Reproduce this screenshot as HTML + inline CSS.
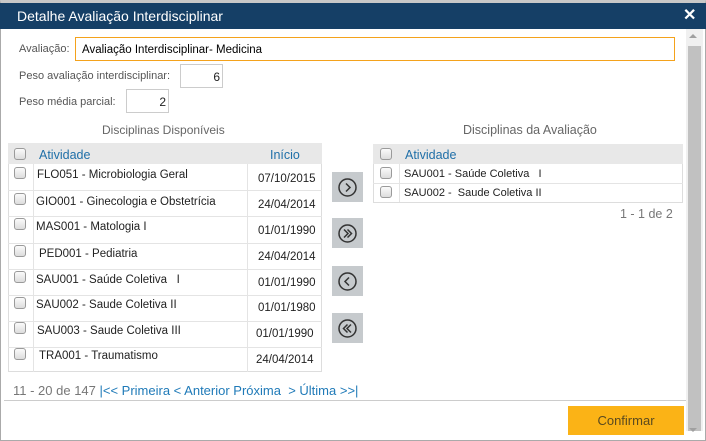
<!DOCTYPE html>
<html><head><meta charset="utf-8"><style>
*{margin:0;padding:0;box-sizing:border-box}
body{width:706px;height:441px;background:#fff;font-family:"Liberation Sans",sans-serif;font-size:11.5px;color:#222;position:relative;overflow:hidden}
.a{position:absolute;white-space:nowrap}
.cb{position:absolute;width:12px;height:12px;border:1px solid #9a9a9a;border-radius:3px;background:linear-gradient(#fafafa,#dcdcdc)}
.btn{position:absolute;left:332px;width:31px;height:30px;background:#c6cacd}
.btn svg{position:absolute;left:5px;top:5px}
.lbl{color:#555;font-size:11px}
.hdr{color:#1f6fa8;font-size:12.5px}
</style></head><body>
<div class="a" style="left:0;top:0;width:706px;height:441px;border:1px solid #aaa;border-top:3px solid #c8c8c8"></div>
<div class="a" style="left:0;top:3px;width:706px;height:26px;background:#153f66"></div>
<div class="a" style="left:17px;top:8px;color:#fff;font-size:14px">Detalhe Avaliação Interdisciplinar</div>
<div class="a" style="left:683px;top:5px;color:#fff;font-size:16px;font-weight:bold">✕</div>
<div class="a" style="left:686px;top:29px;width:17px;height:402px;background:#f0f0f0"></div>
<div class="a" style="left:688px;top:46px;width:13px;height:385px;background:#c1c1c1"></div>
<div class="a" style="left:689px;top:34px;width:0;height:0;border:4px solid transparent;border-bottom:4px solid #a0a0a0;border-top:0"></div>
<div class="a" style="left:689px;top:428px;width:0;height:0;border:4px solid transparent;border-top:4px solid #a0a0a0;border-bottom:0"></div>

<div class="a lbl" style="left:19px;top:43px">Avaliação:</div>
<div class="a" style="left:75px;top:37px;width:600px;height:24px;border:1px solid #f4a21c;padding:6px 6px;font-size:11.5px;color:#000">Avaliação Interdisciplinar- Medicina</div>
<div class="a lbl" style="left:19px;top:70px">Peso avaliação interdisciplinar:</div>
<div class="a" style="left:180px;top:64px;width:43px;height:24px;border:1px solid #ccc;text-align:right;padding:5px 2px;font-size:12px">6</div>
<div class="a lbl" style="left:19px;top:96px">Peso média parcial:</div>
<div class="a" style="left:126px;top:89px;width:43px;height:24px;border:1px solid #ccc;text-align:right;padding:5px 2px;font-size:12px">2</div>

<div class="a" style="left:102px;top:123px;color:#666;font-size:12px">Disciplinas Disponíveis</div>
<div class="a" style="left:8px;top:143px;width:314px;height:21px;background:#e8e8e8"></div>
<div class="cb" style="left:14px;top:148px"></div>
<div class="a hdr" style="left:39px;top:148px">Atividade</div>
<div class="a hdr" style="left:270px;top:148px">Início</div>
<div class="a" style="left:8px;top:164px;width:314px;height:208px;border-left:1px solid #ddd;border-right:1px solid #ddd;border-bottom:1px solid #ddd"></div>
<div class="a" style="left:33px;top:164px;width:1px;height:208px;background:#e4e4e4"></div>
<div class="a" style="left:247px;top:164px;width:1px;height:208px;background:#e4e4e4"></div>

<div class="a" style="left:8px;top:190px;width:314px;height:1px;background:#e4e4e4"></div>
<div class="a" style="left:8px;top:216px;width:314px;height:1px;background:#e4e4e4"></div>
<div class="a" style="left:8px;top:243px;width:314px;height:1px;background:#e4e4e4"></div>
<div class="a" style="left:8px;top:269px;width:314px;height:1px;background:#e4e4e4"></div>
<div class="a" style="left:8px;top:295px;width:314px;height:1px;background:#e4e4e4"></div>
<div class="a" style="left:8px;top:321px;width:314px;height:1px;background:#e4e4e4"></div>
<div class="a" style="left:8px;top:347px;width:314px;height:1px;background:#e4e4e4"></div>

<div class="cb" style="left:14px;top:167px"></div><div class="a" style="left:37px;top:169px">FLO051 - Microbiologia Geral</div><div class="a" style="left:258px;top:173px">07/10/2015</div>
<div class="cb" style="left:14px;top:193px"></div><div class="a" style="left:36px;top:196px">GIO001 - Ginecologia e Obstetrícia</div><div class="a" style="left:258px;top:199px">24/04/2014</div>
<div class="cb" style="left:14px;top:218px"></div><div class="a" style="left:36px;top:221px">MAS001 - Matologia I</div><div class="a" style="left:258px;top:225px">01/01/1990</div>
<div class="cb" style="left:14px;top:245px"></div><div class="a" style="left:39px;top:248px">PED001 - Pediatria</div><div class="a" style="left:258px;top:251px">24/04/2014</div>
<div class="cb" style="left:14px;top:271px"></div><div class="a" style="left:36px;top:274px">SAU001 - Saúde Coletiva&nbsp;&nbsp; I</div><div class="a" style="left:258px;top:277px">01/01/1990</div>
<div class="cb" style="left:14px;top:297px"></div><div class="a" style="left:36px;top:299px">SAU002 - Saude Coletiva II</div><div class="a" style="left:258px;top:302px">01/01/1980</div>
<div class="cb" style="left:14px;top:322px"></div><div class="a" style="left:37px;top:325px">SAU003 - Saude Coletiva III</div><div class="a" style="left:256px;top:328px">01/01/1990</div>
<div class="cb" style="left:14px;top:348px"></div><div class="a" style="left:39px;top:350px">TRA001 - Traumatismo</div><div class="a" style="left:256px;top:354px">24/04/2014</div>

<div class="a" style="left:13px;top:383px;font-size:13px;color:#777">11 - 20 de 147 <span style="color:#1f7ab8">|&lt;&lt; Primeira &lt; Anterior Próxima &nbsp;&gt; Última &gt;&gt;|</span></div>

<div class="btn" style="top:172px"><svg width="21" height="21" viewBox="0 0 21 21"><circle cx="10.5" cy="10.5" r="8.5" fill="none" stroke="#333" stroke-width="1.5"/><path d="M9 6.5l4 4-4 4" fill="none" stroke="#333" stroke-width="1.5"/></svg></div>
<div class="btn" style="top:218px"><svg width="21" height="21" viewBox="0 0 21 21"><circle cx="10.5" cy="10.5" r="8.5" fill="none" stroke="#333" stroke-width="1.5"/><path d="M7 6.5l4 4-4 4M10.5 6.5l4 4-4 4" fill="none" stroke="#333" stroke-width="1.5"/></svg></div>
<div class="btn" style="top:266px"><svg width="21" height="21" viewBox="0 0 21 21"><circle cx="10.5" cy="10.5" r="8.5" fill="none" stroke="#333" stroke-width="1.5"/><path d="M12 6.5l-4 4 4 4" fill="none" stroke="#333" stroke-width="1.5"/></svg></div>
<div class="btn" style="top:313px"><svg width="21" height="21" viewBox="0 0 21 21"><circle cx="10.5" cy="10.5" r="8.5" fill="none" stroke="#333" stroke-width="1.5"/><path d="M10.5 6.5l-4 4 4 4M14 6.5l-4 4 4 4" fill="none" stroke="#333" stroke-width="1.5"/></svg></div>

<div class="a" style="left:463px;top:123px;color:#666;font-size:12.5px">Disciplinas da Avaliação</div>
<div class="a" style="left:373px;top:144px;width:310px;height:20px;background:#e8e8e8"></div>
<div class="cb" style="left:380px;top:148px"></div>
<div class="a hdr" style="left:405px;top:148px">Atividade</div>
<div class="a" style="left:373px;top:164px;width:310px;height:39px;border:1px solid #ddd;border-top:none"></div>
<div class="a" style="left:373px;top:183px;width:310px;height:1px;background:#e4e4e4"></div>
<div class="a" style="left:399px;top:164px;width:1px;height:38px;background:#e4e4e4"></div>
<div class="cb" style="left:380px;top:167px"></div><div class="a" style="left:404px;top:168px;font-size:11px">SAU001 - Saúde Coletiva&nbsp;&nbsp; I</div>
<div class="cb" style="left:380px;top:186px"></div><div class="a" style="left:404px;top:187px;font-size:11px">SAU002 - &nbsp;Saude Coletiva II</div>
<div class="a" style="left:620px;top:207px;color:#777;font-size:12.5px">1 - 1 de 2</div>

<div class="a" style="left:4px;top:400px;width:682px;height:1px;background:#ccc"></div>
<div class="a" style="left:568px;top:406px;width:116px;height:29px;background:#fbb316;color:#5a4a20;font-size:13px;text-align:center;line-height:29px">Confirmar</div>
</body></html>
